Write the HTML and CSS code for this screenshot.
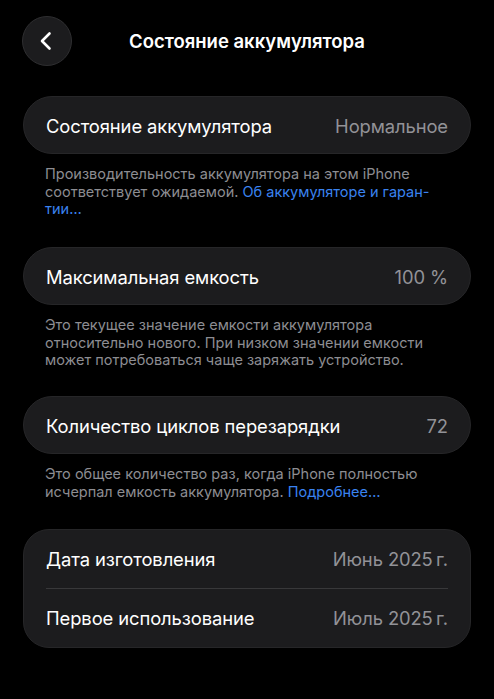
FILE: index.html
```html
<!DOCTYPE html>
<html lang="ru">
<head>
<meta charset="utf-8">
<link rel="stylesheet" href="styles.css">
</head>
<body>
<div class="screen">
  <header class="nav">
    <div class="back">
      <svg width="16" height="24" viewBox="0 0 16 24"><path d="M11.5 4.5 L4 12 L11.5 19.5" fill="none" stroke="#fff" stroke-width="2.6" stroke-linecap="round" stroke-linejoin="round"/></svg>
    </div>
    <div class="title">Состояние аккумулятора</div>
  </header>

  <section class="group g1">
    <div class="card pill">
      <div class="row"><span class="label">Состояние аккумулятора</span><span class="value">Нормальное</span></div>
    </div>
    <p class="note">Производительность аккумулятора на этом iPhone соответствует ожидаемой. <span class="link">Об аккумуляторе и гаран-<br>тии…</span></p>
  </section>

  <section class="group g2">
    <div class="card pill">
      <div class="row"><span class="label">Максимальная емкость</span><span class="value">100 %</span></div>
    </div>
    <p class="note">Это текущее значение емкости аккумулятора относительно нового. При низком значении емкости может потребоваться чаще заряжать устройство.</p>
  </section>

  <section class="group g3">
    <div class="card pill">
      <div class="row"><span class="label">Количество циклов перезарядки</span><span class="value">72</span></div>
    </div>
    <p class="note">Это общее количество раз, когда iPhone полностью исчерпал емкость аккумулятора. <span class="link">Подробнее…</span></p>
  </section>

  <section class="group g4">
    <div class="card multi">
      <div class="row"><span class="label">Дата изготовления</span><span class="value">Июнь 2025&#8239;г.</span></div>
      <div class="divider"></div>
      <div class="row"><span class="label">Первое использование</span><span class="value">Июль 2025&#8239;г.</span></div>
    </div>
  </section>
</div>
</body>
</html>
```
FILE: styles.css
```css
* { box-sizing: border-box; }
html, body { margin: 0; padding: 0; background: #000; }
body {
  font-family: Inter, "Noto Sans", "Liberation Sans", sans-serif;
  color: #fff;
  width: 494px;
  height: 699px;
  overflow: hidden;
}
.screen { padding: 16px 23px 0 23px; }
.nav {
  display: flex;
  align-items: center;
  height: 50px;
  margin-left: -1px;
}
.back {
  width: 50px;
  height: 50px;
  border-radius: 50%;
  background: #1c1c1e;
  border: 1px solid #2e2e30;
  display: flex;
  align-items: center;
  justify-content: center;
  padding-right: 3px;
}
.title {
  margin-left: 57px;
  font-size: 18.5px;
  font-weight: 600;
}
.g1 { margin-top: 30px; }
.card {
  background: #1c1c1e;
  border: 1px solid #262628;
}
.pill { border-radius: 29px; height: 58px; }
.multi { border-radius: 26px; }
.row {
  display: flex;
  justify-content: space-between;
  align-items: center;
  height: 58px;
  padding: 0 22px;
  font-size: 18.4px;
  letter-spacing: -0.1px;
}
.label { color: #fff; }
.value { color: #929297; }
.divider { height: 1px; background: #38383a; margin: 0 22px; }
.note {
  margin: 0;
  padding: 11px 22px 0 22px;
  font-size: 14.5px;
  line-height: 17.6px;
  color: #8d8d92;
  letter-spacing: 0;
}
.g1 .note { height: 93px; }
.g2 .note { height: 91px; }
.g3 .note { height: 75px; }
.link { color: #3a83f0; }
```
